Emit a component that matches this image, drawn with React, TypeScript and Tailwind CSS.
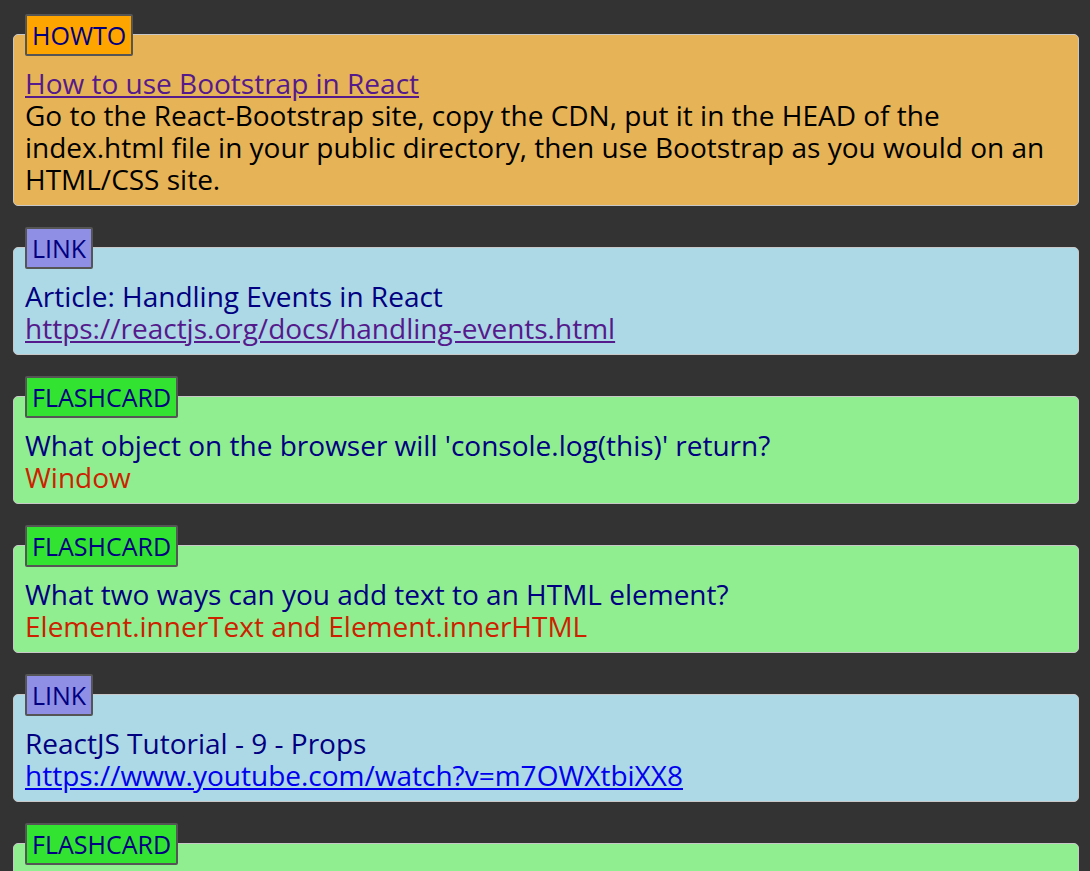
type Item =
  | { kind: "howto"; title: string; href: string; body: string[] }
  | { kind: "link"; title: string; url: string; visited: boolean }
  | { kind: "flashcard"; question: string; answer: string };

const items: Item[] = [
  {
    kind: "howto",
    title: "How to use Bootstrap in React",
    href: "#bootstrap",
    body: [
      "Go to the React-Bootstrap site, copy the CDN, put it in the HEAD of the",
      "index.html file in your public directory, then use Bootstrap as you would on an",
      "HTML/CSS site.",
    ],
  },
  {
    kind: "link",
    title: "Article: Handling Events in React",
    url: "https://reactjs.org/docs/handling-events.html",
    visited: true,
  },
  {
    kind: "flashcard",
    question: "What object on the browser will 'console.log(this)' return?",
    answer: "Window",
  },
  {
    kind: "flashcard",
    question: "What two ways can you add text to an HTML element?",
    answer: "Element.innerText and Element.innerHTML",
  },
  {
    kind: "link",
    title: "ReactJS Tutorial - 9 - Props",
    url: "https://www.youtube.com/watch?v=m7OWXtbiXX8",
    visited: false,
  },
  {
    kind: "flashcard",
    question: "What method turns a JSON string into a JavaScript object?",
    answer: "JSON.parse()",
  },
];

const cardBg = {
  howto: "bg-[#e6b356]",
  link: "bg-[#add8e6]",
  flashcard: "bg-[#90ee90]",
};

const badgeBg = {
  howto: "bg-[#ffa500]",
  link: "bg-[#8f8fe6]",
  flashcard: "bg-[#32e332]",
};

function Card({ item }: { item: Item }) {
  return (
    <div className={`rounded-[5px] border border-[#c8c8c8] px-[11px] pb-[10px] ${cardBg[item.kind]}`}>
      <div
        className={`-mt-[21px] w-fit rounded-[2px] border-2 border-[#555] px-[5px] py-[3px] text-[25px] uppercase text-[#000080] ${badgeBg[item.kind]}`}
      >
        {item.kind}
      </div>
      <div className="mt-[11px]">
        {item.kind === "howto" && (
          <>
            <a href={item.href} className="block w-fit text-[#551a8b] underline">
              {item.title}
            </a>
            <p className="text-black">
              {item.body.map((line, i) => (
                <span key={i} className="block">
                  {line}
                </span>
              ))}
            </p>
          </>
        )}
        {item.kind === "link" && (
          <>
            <p className="text-[#000080]">{item.title}</p>
            <a
              href={item.url}
              className={`underline ${item.visited ? "text-[#551a8b]" : "text-[#0000ee]"}`}
            >
              {item.url}
            </a>
          </>
        )}
        {item.kind === "flashcard" && (
          <>
            <p className="text-[#000080]">{item.question}</p>
            <p className="text-[#cc2200]">{item.answer}</p>
          </>
        )}
      </div>
    </div>
  );
}

export default function App() {
  return (
    <div className="min-h-screen bg-[#333333] pl-[13px] pr-[11px] pt-[34px] pb-10 font-['Open_Sans','Lato',sans-serif] text-[28px] leading-[32px]">
      <div className="flex flex-col gap-[41px]">
        {items.map((item, i) => (
          <Card key={i} item={item} />
        ))}
      </div>
    </div>
  );
}
